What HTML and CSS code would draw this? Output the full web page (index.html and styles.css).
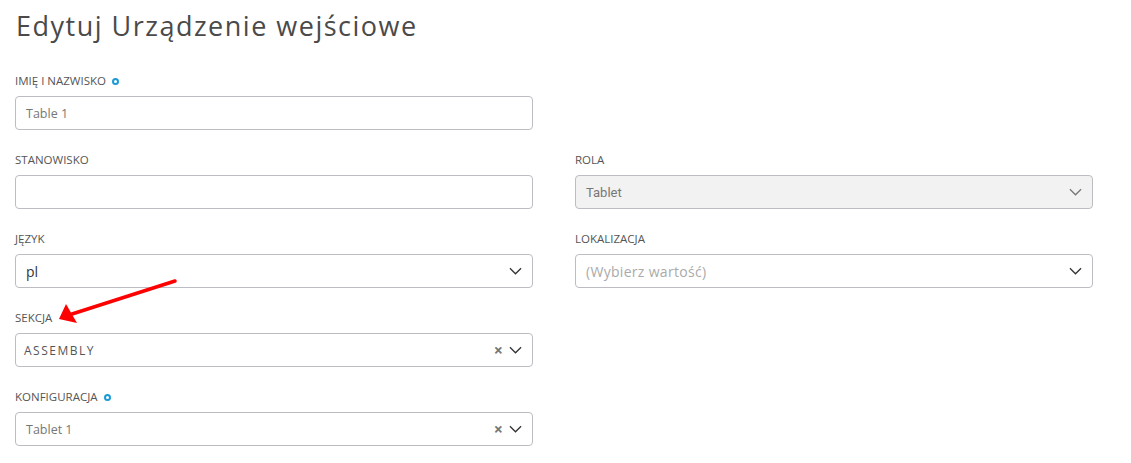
FILE: index.html
```html
<!DOCTYPE html>
<html lang="pl">
<head>
<meta charset="utf-8">
<link rel="stylesheet" href="styles.css">
</head>
<body>
<div class="page">
  <h1 class="title">Edytuj Urządzenie wejściowe</h1>
  <div class="form">
    <div class="field">
      <label class="label">IMIĘ I NAZWISKO <span class="req"></span></label>
      <div class="input"><span class="val muted">Table 1</span></div>
    </div>
    <div class="field empty"></div>

    <div class="field">
      <label class="label">STANOWISKO</label>
      <div class="input"></div>
    </div>
    <div class="field">
      <label class="label">ROLA</label>
      <div class="input disabled"><span class="val roboto">Tablet</span><svg class="chev" viewBox="0 0 14 8"><path d="M1 1l6 6 6-6" fill="none" stroke="#777" stroke-width="1.4"/></svg></div>
    </div>

    <div class="field">
      <label class="label">JĘZYK</label>
      <div class="input"><span class="val dark">pl</span><svg class="chev" viewBox="0 0 14 8"><path d="M1 1l6 6 6-6" fill="none" stroke="#333" stroke-width="1.4"/></svg></div>
    </div>
    <div class="field">
      <label class="label">LOKALIZACJA</label>
      <div class="input"><span class="val placeholder">(Wybierz wartość)</span><svg class="chev" viewBox="0 0 14 8"><path d="M1 1l6 6 6-6" fill="none" stroke="#333" stroke-width="1.4"/></svg></div>
    </div>

    <div class="field">
      <label class="label">SEKCJA</label>
      <div class="input"><span class="val spaced">ASSEMBLY</span><span class="clear">×</span><svg class="chev" viewBox="0 0 14 8"><path d="M1 1l6 6 6-6" fill="none" stroke="#333" stroke-width="1.4"/></svg></div>
    </div>
    <div class="field empty"></div>

    <div class="field">
      <label class="label">KONFIGURACJA <span class="req"></span></label>
      <div class="input"><span class="val muted">Tablet 1</span><span class="clear">×</span><svg class="chev" viewBox="0 0 14 8"><path d="M1 1l6 6 6-6" fill="none" stroke="#333" stroke-width="1.4"/></svg></div>
    </div>
  </div>
  <svg class="arrow" viewBox="0 0 1131 463" width="1131" height="463">
    <line x1="175" y1="281" x2="72" y2="314" stroke="#f00" stroke-width="3.5" stroke-linecap="round"/>
    <polygon points="59,319 66,304 77,323" fill="#f00"/>
  </svg>
</div>
</body>
</html>
```
FILE: styles.css
```css
html, body {
  margin: 0;
  padding: 0;
  background: #fff;
}
.page {
  position: relative;
  padding: 8px 15px 0 15px;
  font-family: "Open Sans", "Noto Sans", sans-serif;
  color: #555;
}
.title {
  margin: 0 0 0 1px;
  font-weight: 400;
  font-size: 27px;
  line-height: 36px;
  letter-spacing: 1.5px;
  color: #4a4a4a;
}
.form {
  display: grid;
  grid-template-columns: 518px 518px;
  column-gap: 42px;
  row-gap: 23px;
  margin-top: 30px;
}
.field {
  display: flex;
  flex-direction: column;
}
.label {
  font-size: 11.5px;
  line-height: 14px;
  height: 14px;
  margin-bottom: 8px;
  margin-left: 0;
  color: #555;
  display: flex;
  align-items: center;
  gap: 2px;
}
.req {
  display: inline-block;
  width: 3px;
  height: 3px;
  border: 2px solid #1a9ad6;
  border-radius: 50%;
  margin-left: 4px;
}
.input {
  height: 32px;
  border: 1px solid #bcbcc2;
  border-radius: 4px;
  display: flex;
  align-items: center;
  padding: 0 10px;
  background: #fff;
}
.input.disabled {
  background: #f2f2f2;
}
.val {
  flex: 1;
  font-size: 12.5px;
}
.muted { color: #777; }
.dark { color: #333; font-size: 14px; }
.placeholder { color: #aaa; letter-spacing: 0.3px; font-size: 14px; }
.roboto { font-family: Roboto, "Liberation Sans", sans-serif; color: #777; font-size: 13px; }
.spaced { letter-spacing: 1.5px; color: #555; font-size: 12px; margin-left: -2px; }
.clear {
  color: #777;
  font-size: 16px;
  font-weight: 700;
  margin-right: 6px;
  line-height: 1;
}
.chev {
  width: 13px;
  height: 8px;
}
.arrow {
  position: absolute;
  left: 0;
  top: 0;
  pointer-events: none;
}
```
